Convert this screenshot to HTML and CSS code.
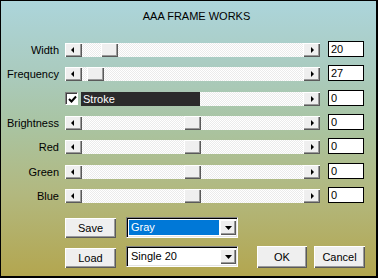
FILE: index.html
```html
<!DOCTYPE html>
<html>
<head>
<meta charset="utf-8">
<link rel="stylesheet" href="styles.css">
</head>
<body>
<div class="win">
  <div class="title">AAA FRAME WORKS</div>
  <div class="rows">
    <div class="row">
      <div class="lbl">Width</div>
      <div class="sb">
        <div class="b3d arr"><span class="tri-l"></span></div>
        <div class="track"><div class="b3d thumb" style="margin-left:19px"></div></div>
        <div class="b3d arr"><span class="tri-r"></span></div>
      </div>
      <div class="edit">20</div>
    </div>
    <div class="row tall">
      <div class="lbl">Frequency</div>
      <div class="sb">
        <div class="b3d arr"><span class="tri-l"></span></div>
        <div class="track"><div class="b3d thumb" style="margin-left:5px"></div></div>
        <div class="b3d arr"><span class="tri-r"></span></div>
      </div>
      <div class="edit">27</div>
    </div>
    <div class="row">
      <div class="lbl"></div>
      <div class="sb">
        <div class="chk"><svg width="9" height="9" viewBox="0 0 9 9"><polyline points="1,4 3.5,6.5 8,1.5" fill="none" stroke="#000" stroke-width="2"/></svg></div>
        <div class="hl">Stroke</div>
        <div class="track"></div>
        <div class="b3d arr"><span class="tri-r"></span></div>
      </div>
      <div class="edit">0</div>
    </div>
    <div class="row">
      <div class="lbl">Brightness</div>
      <div class="sb">
        <div class="b3d arr"><span class="tri-l"></span></div>
        <div class="track"><div class="b3d thumb" style="margin-left:102px"></div></div>
        <div class="b3d arr"><span class="tri-r"></span></div>
      </div>
      <div class="edit">0</div>
    </div>
    <div class="row tall">
      <div class="lbl">Red</div>
      <div class="sb">
        <div class="b3d arr"><span class="tri-l"></span></div>
        <div class="track"><div class="b3d thumb" style="margin-left:102px"></div></div>
        <div class="b3d arr"><span class="tri-r"></span></div>
      </div>
      <div class="edit">0</div>
    </div>
    <div class="row">
      <div class="lbl">Green</div>
      <div class="sb">
        <div class="b3d arr"><span class="tri-l"></span></div>
        <div class="track"><div class="b3d thumb" style="margin-left:102px"></div></div>
        <div class="b3d arr"><span class="tri-r"></span></div>
      </div>
      <div class="edit">0</div>
    </div>
    <div class="row">
      <div class="lbl">Blue</div>
      <div class="sb">
        <div class="b3d arr"><span class="tri-l"></span></div>
        <div class="track"><div class="b3d thumb" style="margin-left:102px"></div></div>
        <div class="b3d arr"><span class="tri-r"></span></div>
      </div>
      <div class="edit">0</div>
    </div>
  </div>
  <div class="bottom">
    <div class="brow">
      <div class="b3d btn save">Save</div>
      <div class="combo">
        <div class="cval sel">Gray</div>
        <div class="b3d drop"><svg width="7" height="4" viewBox="0 0 7 4"><path d="M0 0h7L3.5 4z" fill="#000"/></svg></div>
      </div>
    </div>
    <div class="brow second">
      <div class="b3d btn load">Load</div>
      <div class="combo">
        <div class="cval">Single 20</div>
        <div class="b3d drop"><svg width="7" height="4" viewBox="0 0 7 4"><path d="M0 0h7L3.5 4z" fill="#000"/></svg></div>
      </div>
      <div class="b3d btn ok">OK</div>
      <div class="b3d btn cancel">Cancel</div>
    </div>
  </div>
</div>
</body>
</html>
```

FILE: styles.css
```css
* { box-sizing: border-box; }
html, body { margin: 0; padding: 0; }
body {
  width: 378px;
  height: 278px;
  overflow: hidden;
  font-family: "Liberation Sans", Arial, sans-serif;
  font-size: 11px;
  color: #000;
}
.win {
  width: 378px;
  height: 278px;
  border: 1px solid #000;
  border-right-width: 2px;
  border-bottom-width: 2px;
  background: linear-gradient(to bottom, #acd5db 0%, #aacbbf 25%, #a9c4a2 45%, #b2b87f 70%, #b3a64f 100%);
  display: flex;
  flex-direction: column;
}
.title {
  margin-top: 9px;
  height: 13px;
  line-height: 13px;
  text-align: center;
  padding-left: 16px;
}
.rows {
  margin-top: 14px;
  display: flex;
  flex-direction: column;
}
.row {
  display: flex;
  align-items: flex-start;
  height: 24px;
}
.row.tall { height: 25px; }
.lbl {
  width: 58px;
  text-align: right;
  margin-top: 6px;
  line-height: 14px;
}
.sb {
  margin-left: 6px;
  margin-top: 6px;
  width: 255px;
  height: 14px;
  display: flex;
}
.b3d {
  background: #efefef;
  box-shadow: inset 1px 1px #ffffff, inset -1px -1px #5a5a5a, inset -2px -2px #9a9a9a;
}
.arr {
  width: 17px;
  height: 14px;
  flex: none;
  display: flex;
  align-items: center;
  justify-content: center;
}
.tri-l {
  width: 0; height: 0;
  border-top: 3px solid transparent;
  border-bottom: 3px solid transparent;
  border-right: 3px solid #000;
  margin-right: 2px;
}
.tri-r {
  width: 0; height: 0;
  border-top: 3px solid transparent;
  border-bottom: 3px solid transparent;
  border-left: 3px solid #000;
  margin-left: 1px;
}
.track {
  flex: 1;
  height: 14px;
  display: flex;
  background-color: #fff;
  background-image: repeating-conic-gradient(#ebebeb 0 25%, #ffffff 0 50%);
  background-size: 2px 2px;
}
.thumb {
  width: 17px;
  height: 14px;
  flex: none;
}
.chk {
  width: 13px;
  height: 13px;
  flex: none;
  background: #fff;
  border: 1px solid;
  border-color: #808080 #ffffff #ffffff #808080;
  box-shadow: inset 1px 1px #404040;
  display: flex;
  align-items: center;
  justify-content: center;
  padding: 1px 0 0 1px;
}
.chk svg { display: block; }
.hl {
  width: 119px;
  height: 14px;
  margin-left: 3px;
  flex: none;
  background: #2b2b2b;
  color: #fff;
  line-height: 14px;
  padding-left: 2px;
}
.edit {
  margin-left: 8px;
  margin-top: 4px;
  width: 36px;
  height: 16px;
  border: 1px solid #000;
  background: #fff;
  line-height: 14px;
  padding-left: 2px;
}
.bottom {
  margin-top: 10px;
  display: flex;
  flex-direction: column;
}
.brow {
  display: flex;
  align-items: flex-start;
  height: 21px;
}
.brow.second {
  margin-top: 8px;
  height: 22px;
}
.btn {
  height: 20px;
  display: flex;
  align-items: center;
  justify-content: center;
  flex: none;
}
.save { width: 51px; margin-left: 64px; margin-top: 1px; }
.load { width: 51px; margin-left: 64px; margin-top: 2px; }
.ok { width: 50px; height: 22px; margin-left: 19px; }
.cancel { width: 51px; height: 22px; margin-left: 7px; }
.combo {
  width: 112px;
  height: 21px;
  margin-left: 10px;
  flex: none;
  background: #fff;
  border: 1px solid;
  border-color: #808080 #ffffff #ffffff #808080;
  box-shadow: inset 1px 1px #000, inset -1px -1px #e3e3e3;
  padding: 2px 1px 1px 2px;
  display: flex;
  gap: 1px;
}
.cval {
  flex: 1;
  height: 15px;
  line-height: 15px;
  padding-left: 2px;
}
.cval.sel {
  background: #0078d7;
  color: #fff;
}
.drop {
  width: 16px;
  height: 15px;
  flex: none;
  display: flex;
  align-items: center;
  justify-content: center;
}
.drop svg { display: block; }
```
